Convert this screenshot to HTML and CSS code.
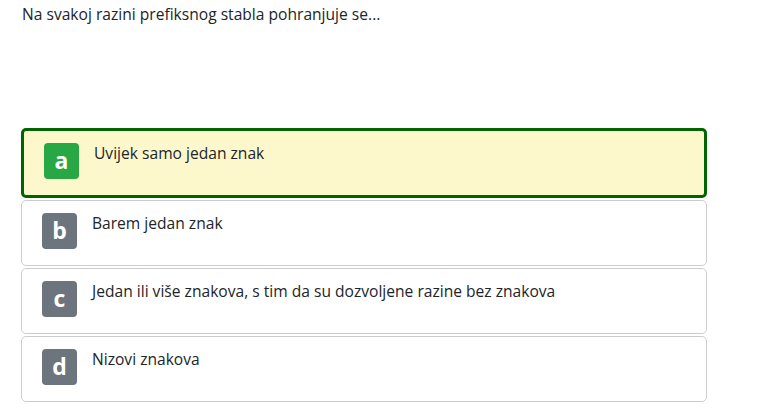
FILE: index.html
```html
<!DOCTYPE html>
<html lang="hr">
<head>
<meta charset="utf-8">
<title>Pitanje</title>
<link rel="stylesheet" href="styles.css">
</head>
<body>
<main class="quiz">
  <p class="question">Na svakoj razini prefiksnog stabla pohranjuje se...</p>
  <div class="options">
    <div class="option option--selected">
      <span class="badge badge--correct">a</span>
      <span class="option-text">Uvijek samo jedan znak</span>
    </div>
    <div class="option">
      <span class="badge">b</span>
      <span class="option-text">Barem jedan znak</span>
    </div>
    <div class="option">
      <span class="badge">c</span>
      <span class="option-text">Jedan ili više znakova, s tim da su dozvoljene razine bez znakova</span>
    </div>
    <div class="option">
      <span class="badge">d</span>
      <span class="option-text">Nizovi znakova</span>
    </div>
  </div>
</main>
</body>
</html>
```
FILE: styles.css
```css
html, body {
  margin: 0;
  padding: 0;
  background: #ffffff;
}
body {
  font-family: "Open Sans", "Noto Sans", sans-serif;
  font-size: 15.6px;
  color: #212529;
}
.quiz {
  width: 686px;
  padding: 2px 0 0 21px;
}
.question {
  margin: 0;
  line-height: 24px;
  padding-left: 1px;
}
.options {
  margin-top: 102px;
  display: flex;
  flex-direction: column;
  gap: 2px;
}
.option {
  display: flex;
  align-items: flex-start;
  padding: 12px 20px 16px 20px;
  border: 1px solid #cccccc;
  border-radius: 5px;
  background: #ffffff;
}
.option--selected {
  border: 3px solid #006400;
  background: #fdf8cc;
}
.badge {
  flex: 0 0 35px;
  height: 36px;
  border-radius: 4px;
  background: #6c757d;
  color: #ffffff;
  font-weight: 700;
  font-size: 23px;
  line-height: 35px;
  text-align: center;
  margin-right: 15px;
}
.badge--correct {
  background: #28a745;
}
.option-text {
  line-height: 21px;
}
```
